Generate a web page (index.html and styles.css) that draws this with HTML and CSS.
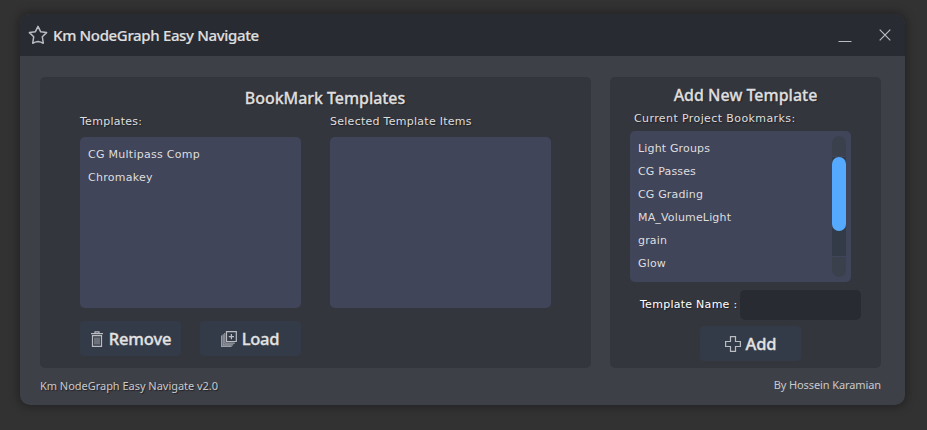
FILE: index.html
```html
<!DOCTYPE html>
<html lang="en">
<head>
<meta charset="utf-8">
<title>Km NodeGraph Easy Navigate</title>
<link rel="stylesheet" href="styles.css">
</head>
<body>
<main class="window">
  <header class="titlebar">
    <svg class="star" width="20" height="20" viewBox="0 0 20 20"><path d="M10 1.4l2.6 5.3 6 .9-4.3 4.2 1 6.4q-2.5-1.2-5.3-1.6-2.8.4-5.3 1.6l1-6.4-4.3-4.2 6-.9z"/></svg>
    <h1 class="app-title">Km NodeGraph Easy Navigate</h1>
    <div class="controls">
      <svg class="minimize" width="14" height="14" viewBox="0 0 14 14"><path d="M.5 12.5h13"/></svg>
      <svg width="12" height="12" viewBox="0 0 12 12"><path d="M.7.7l10.6 10.6M11.3.7L.7 11.3"/></svg>
    </div>
  </header>
  <div class="content">
    <section class="panel saved">
      <h2 class="heading bookmark-heading">BookMark Templates</h2>
      <div class="columns">
        <div>
          <div class="label">Templates:</div>
          <ul class="list">
            <li>CG Multipass Comp</li>
            <li>Chromakey</li>
          </ul>
        </div>
        <div>
          <div class="label">Selected Template Items</div>
          <ul class="list"></ul>
        </div>
      </div>
      <div class="actions">
        <button class="btn"><svg class="trash" width="12" height="16" viewBox="0 0 12 16"><path d="M0 2.7h12M4 2.5V.8h4v1.7M1.5 4.6v10.7h9V4.6z"/><path d="M4 6.5v7M6 6.5v7M8 6.5v7" class="bars"/></svg><span class="remove-text">Remove</span></button>
        <button class="btn load"><svg width="16" height="16" viewBox="0 0 16 16"><path d="M5.5.7h9.8v9.8H5.5z"/><path class="sheets" d="M3.8 2v10.2h10M2.2 3.3v10.5h10M.6 4.6v10.8h10"/><path d="M10.4 3v5.2M7.8 5.6H13"/></svg><span>Load</span></button>
      </div>
    </section>
    <section class="panel create">
      <h2 class="heading add-heading">Add New Template</h2>
      <div class="label current-label">Current Project Bookmarks:</div>
      <div class="list bookmarks">
        <ul class="rows">
          <li>Light Groups</li><li>CG Passes</li><li>CG Grading</li><li>MA_VolumeLight</li><li>grain</li><li>Glow</li>
        </ul>
        <div class="scroll"><div class="cap top"></div><div class="track"><div class="thumb"></div></div><div class="cap bottom"></div></div>
      </div>
      <div class="field"><label class="label name-label" for="name">Template Name :</label><input id="name" type="text"></div>
      <button class="btn add"><svg width="16" height="16" viewBox="0 0 16 16"><path d="M5.5.6h5v4.9h4.9v5h-4.9v4.9h-5v-4.9H.6v-5h4.9z"/></svg><span>Add</span></button>
    </section>
  </div>
  <footer class="footer"><span class="version">Km NodeGraph Easy Navigate v2.0</span><span class="author">By Hossein Karamian</span></footer>
</main>
</body>
</html>
```
FILE: styles.css
```css
* { box-sizing: border-box; }
body { margin: 0; height: 430px; padding: 14px 22px 25px 20px; overflow: hidden; background: #323232; color: #dedede; font: 11px "DejaVu Sans", sans-serif; }
h1, h2, ul { margin: 0; padding: 0; }
svg { display: block; fill: none; stroke: #b9bcc1; stroke-width: 1.2; flex: none; }
.window { width: 885px; height: 391px; border-radius: 10px; overflow: hidden; background: #3e4048; box-shadow: 0 0 10px 2px rgba(0, 0, 0, .3); }
.titlebar { height: 42px; display: flex; align-items: center; padding: 0 14px 0 8px; background: #292b33; }
.star { stroke-width: 1.5; stroke-linejoin: round; }
.app-title { margin-left: 5px; font: 500 15px/22px "Noto Sans", sans-serif; letter-spacing: -.35px; white-space: nowrap; -webkit-text-stroke: .2px; }
.controls { margin-left: auto; display: flex; align-items: center; gap: 27px; }
.minimize { margin-top: 2px; }
.content { height: 312px; padding: 21px 24px 0 20px; display: flex; gap: 19px; }
.panel { height: 291px; border-radius: 5px; background: #34363e; }
.saved { width: 551px; padding: 9px 40px 0; }
.create { width: 271px; padding: 6px 20px 0; }
.heading { text-align: center; font: 500 16px/24px "Noto Sans", sans-serif; white-space: nowrap; -webkit-text-stroke: .3px; text-shadow: 1px 1px 1px #202126; }
.bookmark-heading { margin-left: 19px; letter-spacing: -.05px; }
.label { height: 22px; line-height: 24px; white-space: nowrap; letter-spacing: .27px; text-shadow: 1px 1px 1px #202126; }
.columns { display: flex; gap: 29px; }
.columns .label { height: 27px; }
.list { width: 221px; height: 171px; padding: 6px 8px; border-radius: 5px; background: #41455a; list-style: none; }
li { height: 23px; line-height: 23px; list-style: none; white-space: nowrap; letter-spacing: .27px; }
.actions { display: flex; gap: 19px; margin-top: 13px; }
.btn { width: 101px; height: 35px; padding: 0; border: 0; border-radius: 4px; display: flex; align-items: center; justify-content: center; gap: 5px; background: #343b48; color: #e2e2e2; font: 500 16.5px/24px "Noto Sans", sans-serif; letter-spacing: -.15px; -webkit-text-stroke: .3px; }
.load { letter-spacing: -.3px; padding-right: 1px; }
.trash { margin-left: 1px; }
.remove-text { margin-left: 1px; }
.bars { stroke-width: 1.2; stroke: #92959c; }
.sheets { stroke: #9b9ea5; }
.current-label { padding-left: 4px; height: 24px; letter-spacing: .4px; }
.bookmarks { height: 151px; display: flex; justify-content: space-between; padding: 5px 5px 5px 8px; }
.rows { padding-top: 1px; }
.rows li { letter-spacing: .16px; }
.scroll { width: 14px; height: 141px; display: flex; flex-direction: column; gap: 1px; }
.cap { height: 20px; background: #3b404d; }
.top { border-radius: 7px 7px 0 0; }
.bottom { border-radius: 0 0 7px 7px; }
.track { height: 99px; background: #343b48; }
.thumb { height: 74px; border-radius: 7px; background: #55aaff; }
.field { display: flex; align-items: center; justify-content: space-between; width: 231px; margin-top: 8px; padding-left: 10px; }
.name-label { color: #fff; height: 24px; }
input { width: 121px; height: 30px; padding: 0 8px; border: 0; border-radius: 5px; background: #292b33; color: #fff; font: inherit; }
.add { margin: 6px 0 0 70px; }
.footer { display: flex; justify-content: space-between; padding: 9px 24px 0 20px; font: 11px/18px "Noto Sans", sans-serif; color: #c9c9cb; white-space: nowrap; }
.version { letter-spacing: -.03px; text-shadow: 1px 1px 1px #202126; }
.author { margin-top: -1px; letter-spacing: -.1px; }
```
